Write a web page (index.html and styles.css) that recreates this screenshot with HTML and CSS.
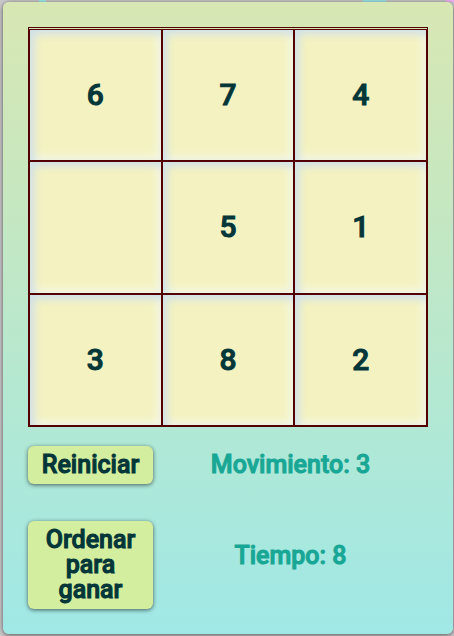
FILE: index.html
```
<!DOCTYPE html>
<html lang="es">
<head>
<meta charset="utf-8">
<meta name="viewport" content="width=device-width, initial-scale=1">
<title>Puzzle</title>
<link rel="stylesheet" href="styles.css">
</head>
<body>
<main class="card">
  <section class="board">
    <div class="tile">6</div>
    <div class="tile">7</div>
    <div class="tile">4</div>
    <div class="tile"></div>
    <div class="tile">5</div>
    <div class="tile">1</div>
    <div class="tile">3</div>
    <div class="tile">8</div>
    <div class="tile">2</div>
  </section>
  <section class="panel">
    <div class="actions">
      <button class="button" type="button">Reiniciar</button>
      <button class="button" type="button">Ordenar para ganar</button>
    </div>
    <div class="stats">
      <p class="stat">Movimiento: 3</p>
      <p class="stat">Tiempo: 8</p>
    </div>
  </section>
</main>
</body>
</html>
```
FILE: styles.css
```
* {
  box-sizing: border-box;
}

body {
  margin: 0;
  padding: 2px 1px 2px 3px;
  background:
    linear-gradient(90deg, transparent 39px, #9ff0ee 39px, #9ff0ee 46px, transparent 46px, transparent 363px, #9fe8ea 363px, #9fe8ea 386px, transparent 386px, transparent 446px, #f0b0f0 446px) top / 100% 2px no-repeat,
    #cbc9cb;
  font-family: Roboto, "Liberation Sans", sans-serif;
  color: #033638;
}

.card {
  padding: 25px;
  border-radius: 6px;
  background: linear-gradient(#d8e7b3, #c5e7c1 33%, #b1e8d5 67%, #a0e8e6);
  box-shadow: 0 1px 5px rgba(0, 0, 0, 0.6);
}

.board {
  display: grid;
  grid-template-columns: repeat(3, 1fr);
  grid-template-rows: repeat(3, 1fr);
  aspect-ratio: 1;
  padding-top: 1px;
  border: 1px solid #530000;
}

.tile {
  display: flex;
  align-items: center;
  justify-content: center;
  padding-bottom: 1px;
  border: 1px solid #530000;
  background: #f4f2c0;
  box-shadow: inset 4px 4px 8px #cfdfeb, inset -4px -4px 8px #f5f7e4;
  font-size: 30px;
  font-weight: 500;
  -webkit-text-stroke: 1px;
}

.panel {
  display: flex;
  margin-top: 19px;
}

.actions {
  display: flex;
  flex-direction: column;
  gap: 37px;
  width: 125px;
}

.button {
  padding: 6px 12px 7px;
  border: 0;
  border-radius: 6px;
  background: #d4ee9f;
  box-shadow: 0 1px 4px rgba(0, 0, 0, 0.6);
  color: inherit;
  font: 500 25px/25px Roboto, "Liberation Sans", sans-serif;
  -webkit-text-stroke: 1px;
}

.stats {
  display: flex;
  flex: 1;
  flex-direction: column;
  gap: 61px;
  padding-top: 4px;
  text-align: center;
}

.stat {
  margin: 0;
  color: #18a795;
  font-size: 25px;
  font-weight: 500;
  line-height: 30px;
  -webkit-text-stroke: 1px;
}
```
